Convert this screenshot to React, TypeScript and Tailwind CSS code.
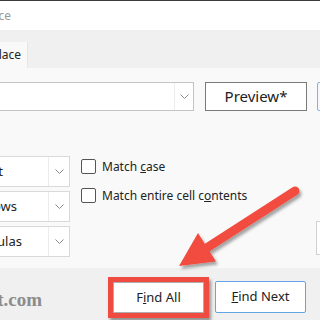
import React from "react";

function Chevron({ className }: { className?: string }) {
  return (
    <svg width="9" height="5" viewBox="0 0 9 5" className={className}>
      <polyline points="0.5,0.5 4.5,4.5 8.5,0.5" fill="none" stroke="#8a8a8a" strokeWidth="1" />
    </svg>
  );
}

function Select({ label, end }: { label: string; end: string }) {
  return (
    <div className="-ml-[2px] flex h-[31px] w-[72px] shrink-0 border border-[#d9d9d9] bg-white">
      <div className="flex flex-1 items-center">
        <div className={`flex justify-end whitespace-nowrap ${end}`}>{label}</div>
      </div>
      <div className="flex w-[21px] items-center justify-center border-l border-[#ececec]">
        <Chevron />
      </div>
    </div>
  );
}

function Check({ children }: { children: React.ReactNode }) {
  return (
    <div className="flex h-[15px] items-center gap-[6px]">
      <div className="h-[15px] w-[15px] shrink-0 rounded-[2px] border border-[#555] bg-white" />
      <span className="whitespace-nowrap">{children}</span>
    </div>
  );
}

export default function App() {
  return (
    <div className="relative flex h-[320px] w-[320px] flex-col overflow-hidden bg-[#f9f9f9] font-['Noto_Sans',sans-serif] text-[12px] text-[#222]">
      <div className="h-[1px] shrink-0 bg-[#3c3c3c]" />
      <div className="flex h-[29px] shrink-0 items-center bg-white text-[#9a9a9a]">
        <div className="flex w-[11px] justify-end whitespace-nowrap">Find and Replace</div>
      </div>
      <div className="flex h-[38px] shrink-0 items-end bg-[#f0f0f0]">
        <div className="flex h-[26px] w-[28px] items-center border-r border-[#e6e6e6] bg-[#f9f9f9]">
          <div className="flex w-[21px] justify-end whitespace-nowrap">Replace</div>
        </div>
      </div>

      <div className="flex flex-col pt-[14px]">
        <div className="flex h-[29px] items-stretch">
          <div className="-ml-[2px] flex w-[196px] shrink-0 border border-[#c4c4c4] bg-white">
            <div className="flex-1" />
            <div className="flex w-[19px] items-center justify-center border-l border-[#ececec]">
              <Chevron />
            </div>
          </div>
          <button className="ml-[11px] w-[102px] shrink-0 border border-[#7a7a7a] bg-white text-[15px] leading-none text-[#222]">
            Preview*
          </button>
          <div className="ml-[10px] w-[40px] shrink-0 rounded-[2px] border border-[#7eb4ea] bg-[#f4f8fc]" />
        </div>

        <div className="mt-[45px] flex">
          <div className="flex shrink-0 flex-col gap-[4px] text-[13px]">
            <Select label="Sheet" end="w-[4px]" />
            <Select label="By Rows" end="w-[18px]" />
            <Select label="Formulas" end="w-[23px]" />
          </div>
          <div className="ml-[11px] flex flex-col gap-[14px] pt-[3px]">
            <Check>
              Match <u>c</u>ase
            </Check>
            <Check>
              Match entire cell c<u>o</u>ntents
            </Check>
          </div>
          <div className="ml-auto mt-[65px] h-[34px] w-[4px] shrink-0 border border-r-0 border-[#d0d0d0] bg-white" />
        </div>
      </div>

      <div className="mt-[11px] flex h-[53px] shrink-0 items-start border-b border-[#9a9a9a] bg-[#f0f0f0]">
        <div className="mt-[22px] flex w-[42px] shrink-0 justify-end whitespace-nowrap font-['Liberation_Serif',serif] text-[19px] leading-none font-bold text-[#8c8c8c]">
          groovypost.com
        </div>
        <div className="ml-[66px] mt-[9px] h-[41px] w-[101px] shrink-0 border-[5px] border-[#f04b40] shadow-[2px_3px_3px_rgba(0,0,0,0.4)]">
          <div className="flex h-full w-full items-center justify-center border border-[#adadad] bg-white text-[13px]">
            F<u>i</u>nd All
          </div>
        </div>
        <button className="ml-[6px] mt-[13px] h-[32px] w-[91px] shrink-0 rounded-[2px] border border-[#62a4e6] bg-white text-[13px] text-[#222]">
          <u>F</u>ind Next
        </button>
      </div>

      <svg
        className="pointer-events-none absolute left-0 top-0"
        width="320"
        height="320"
        viewBox="0 0 320 320"
      >
        <defs>
          <filter id="sh" x="-20%" y="-20%" width="140%" height="140%">
            <feDropShadow dx="2" dy="3" stdDeviation="1.5" floodColor="#000" floodOpacity="0.35" />
          </filter>
        </defs>
        <g filter="url(#sh)" fill="#f24b3f">
          <line x1="295" y1="191" x2="205" y2="249" stroke="#f24b3f" strokeWidth="9" strokeLinecap="round" />
          <polygon points="179,266 216,261.5 198,233" />
        </g>
      </svg>
    </div>
  );
}
